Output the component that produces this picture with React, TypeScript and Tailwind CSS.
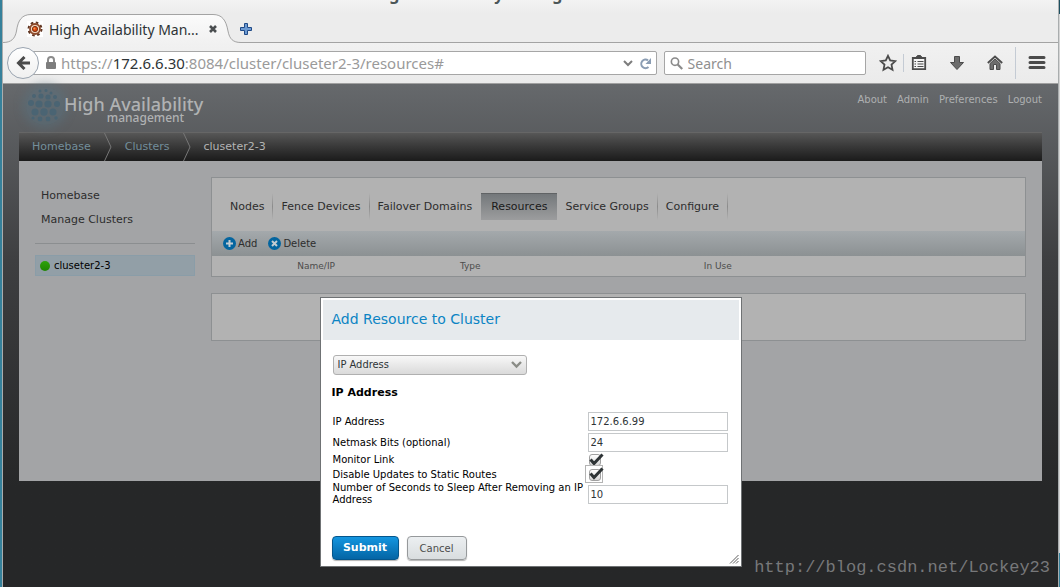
import type { ReactNode } from "react"

const tabs = ["Nodes", "Fence Devices", "Failover Domains", "Resources", "Service Groups", "Configure"]
const userLinks = ["About", "Admin", "Preferences", "Logout"]
const columns = [
  { name: "", width: "w-[10%]" },
  { name: "Name/IP", width: "w-[20%]" },
  { name: "Type", width: "w-[30%]" },
  { name: "In Use", width: "w-[40%]" }
]

const TabTitle = () => (
  <div className="relative flex h-[29px] w-[238px] items-center pl-6 pr-[23px]">
    <svg className="absolute inset-0" width="238" height="29" viewBox="0 0 238 29" fill="none">
      <defs>
        <linearGradient id="tab" x1="0" y1="0" x2="0" y2="1">
          <stop offset="0" stopColor="#fbfbfb" />
          <stop offset="1" stopColor="#f1f1f1" />
        </linearGradient>
      </defs>
      <path d="M0 29V28.500C8 28.500 12 25 13.500 17C15 6 19 .5 28 .5H210C219 .5 223 6 225 17C226.500 25 230 28.500 238 28.500V29Z" fill="url(#tab)" />
      <path d="M0 28.500C8 28.500 12 25 13.500 17C15 6 19 .5 28 .5H210C219 .5 223 6 225 17C226.500 25 230 28.500 238 28.500" stroke="#a3a3a3" />
    </svg>
    <svg className="relative shrink-0" width="16" height="16" viewBox="0 0 16 16">
      <rect width="16" height="16" fill="#fff" />
      <circle cx="8" cy="8" r="6.500" fill="none" stroke="#5d3522" strokeWidth="2" strokeDasharray="2.600 2.500" />
      <circle cx="8" cy="8" r="5" fill="#f3d9c4" stroke="#8d4a2b" strokeWidth="1.800" />
      <circle cx="8" cy="8" r="2.600" fill="#d9420c" stroke="#7b3413" />
      <circle cx="7.400" cy="7.400" r="1" fill="#ff9a4d" />
    </svg>
    <span className="relative ml-[6px] flex-1 whitespace-nowrap pt-[2px] text-[14px] text-[#2e3436]">High Availability Man...</span>
    <button aria-label="Close tab" className="relative">
      <svg width="10" height="10" viewBox="0 0 10 10"><path d="M2 2L8 8M8 2L2 8" stroke="#4a4e50" strokeWidth="2.600" /></svg>
    </button>
  </div>
)

const ToolButton = ({ label, children }: { label: string; children: ReactNode }) => (
  <button aria-label={label} className="flex w-5 justify-center">
    <svg width="18" height="18" viewBox="0 0 18 18" fill="none" stroke="#4b4b4b">{children}</svg>
  </button>
)

const BrowserChrome = () => (
  <header className="bg-[#ececec] font-['Noto_Sans',sans-serif]">
    <div className="h-[14px] overflow-hidden bg-linear-to-b from-[#f3f3f3] to-[#ececec] pl-[35%]">
      <div className="-mt-[16px] whitespace-nowrap text-[16px] font-bold leading-[20px] text-[#4c5658]">High Availability Management - Mozilla Firefox</div>
    </div>
    <div className="flex h-[29px] items-end border-b border-[#a3a3a3]">
      <div className="-mb-px"><TabTitle /></div>
      <button aria-label="New tab" className="-ml-px mb-[7px]">
        <svg width="12" height="12" viewBox="0 0 12 12"><path d="M4.500.5H7.500V4.500H11.500V7.500H7.500V11.500H4.500V7.500H.5V4.500H4.500Z" fill="#6c9ad2" stroke="#204a87" strokeLinejoin="round" /></svg>
      </button>
    </div>
    <div className="flex h-[41px] items-center border-b border-[#a0a0a0] bg-linear-to-b from-[#f1f1f1] to-[#ebebeb] pl-1">
      <button aria-label="Back" className="relative flex size-8 shrink-0 items-center justify-center rounded-full border border-[#9aa4b0] bg-linear-to-b from-white to-[#f0f0f0]">
        <svg width="14" height="14" viewBox="0 0 14 14" fill="none" stroke="#4b4b4b" strokeWidth="3"><path d="M14 7H3M8.500 1L2.500 7L8.500 13" /></svg>
      </button>
      <div className="-ml-3 flex h-6 flex-1 items-center rounded-[2px] border border-[#a6a6a6] bg-white pl-[17px] pr-1">
        <svg width="12" height="14" viewBox="0 0 12 14"><path d="M3 7V4A3 3 0 0 1 9 4V7" fill="none" stroke="#8b8b8b" strokeWidth="2" /><rect x="1" y="6" width="10" height="7" rx="1" fill="#7d7d7d" /></svg>
        <div className="ml-1 flex-1 whitespace-nowrap text-[15px] text-[#9a9a9a]">
          https://<span className="text-[#2e3436]">172.6.6.30</span>:8084/cluster/cluseter2-3/resources#
        </div>
        <svg width="10" height="7" viewBox="0 0 10 7" fill="none" stroke="#7d7d7d" strokeWidth="2"><path d="M1 1L5 5L9 1" /></svg>
        <svg className="ml-[6px]" width="13" height="13" viewBox="0 0 13 13"><path d="M9.500 10A4.300 4.300 0 1 1 9 3.300" fill="none" stroke="#8b9db3" strokeWidth="2" /><path d="M12 1V7H6.500Z" fill="#8b9db3" /></svg>
      </div>
      <div className="ml-[7px] flex h-6 w-[202px] items-center rounded-[2px] border border-[#a6a6a6] bg-white px-[5px]">
        <svg width="15" height="15" viewBox="0 0 15 15" fill="none" stroke="#8b8b8b"><circle cx="5.500" cy="5.500" r="4" strokeWidth="1.800" /><path d="M8.500 8.500L13.500 13.500" strokeWidth="2.400" /></svg>
        <input aria-label="Search" placeholder="Search" className="ml-1 w-full text-[14px] placeholder:text-[#8f8f8f] outline-none" />
      </div>
      <div className="flex items-center pl-[12px]">
        <ToolButton label="Bookmark"><path d="M9 1.800L11.200 6.500L16.300 7.100L12.500 10.600L13.500 15.700L9 13.200L4.500 15.700L5.500 10.600L1.700 7.100L6.800 6.500Z" strokeWidth="1.800" /></ToolButton>
        <div className="mx-[5px] h-[18px] w-px bg-[#c4cbd4]" />
        <ToolButton label="Bookmarks list">
          <path d="M2.800 4H15.200V15.200H2.800Z" fill="#f4f4f4" strokeWidth="1.800" /><path d="M5.500 4L7.500 1.500H10.500L12.500 4Z" fill="#4b4b4b" /><path d="M4.500 7.500H6M7.500 7.500H13.500M4.500 10H6M7.500 10H13.500M4.500 12.500H6M7.500 12.500H13.500" strokeWidth="1.200" />
        </ToolButton>
        <div className="ml-[18px]"><ToolButton label="Downloads"><path d="M6.500 2.500H11.500V8.500H15.500L9 15.500L2.500 8.500H6.500Z" fill="#6d6d6d" /></ToolButton></div>
        <div className="ml-[18px]"><ToolButton label="Home"><path d="M1.800 9L9 2.500L16.200 9" strokeWidth="1.800" /><path d="M4 9.500L9 5L14 9.500V15.500H10.500V10.500H7.500V15.500H4Z" fill="#6d6d6d" /></ToolButton></div>
        <div className="ml-[10px] h-8 w-px bg-[#c4cbd4]" />
        <div className="mx-[11px]"><ToolButton label="Menu"><path d="M2 3.500H16M2 8.500H16M2 13.500H16" strokeWidth="3" strokeLinecap="round" /></ToolButton></div>
      </div>
    </div>
  </header>
)

const Logo = () => (
  <div className="flex items-start font-['Noto_Sans',sans-serif] text-[#b0b2b3]">
    <div className="flex size-[38px] items-center justify-center rounded-full bg-[#587382]/40 shadow-[0_0_8px_4px_rgba(88,115,130,0.4)]">
      <svg width="36" height="36" viewBox="0 0 36 36" fill="#4a6473">
        <circle cx="13" cy="3" r="1.500" /><circle cx="19" cy="2.500" r="1.500" /><circle cx="24" cy="5" r="1.500" />
        <circle cx="7" cy="8" r="2" /><circle cx="14" cy="8" r="2.600" /><circle cx="21" cy="9" r="2.600" /><circle cx="28" cy="9" r="2" />
        <circle cx="4" cy="15" r="3" /><circle cx="12" cy="16" r="3.600" /><circle cx="21" cy="16" r="3.600" /><circle cx="30" cy="16" r="3" />
        <circle cx="8" cy="24" r="3.500" /><circle cx="17" cy="24" r="3.700" /><circle cx="26" cy="24" r="3.500" />
        <circle cx="13" cy="31" r="2.400" /><circle cx="21" cy="31" r="2.400" /><circle cx="29" cy="30" r="1.700" /><circle cx="6" cy="30" r="1.500" />
      </svg>
    </div>
    <div className="pt-[7px] text-right">
      <div className="text-[18px] font-medium leading-[20px]">High Availability</div>
      <div className="pr-[19px] text-[12px] font-medium leading-[8px]">management</div>
    </div>
  </div>
)

const Crumb = ({ children }: { children: ReactNode }) => (
  <>
    <a href="#" className="px-[13px] text-[#738e9b]">{children}</a>
    <svg width="8" height="28" viewBox="0 0 8 28" fill="none" stroke="#777"><path d="M.5 0L7 14L.5 28" /></svg>
  </>
)

const Sidebar = () => (
  <aside className="w-[160px] shrink-0">
    <nav className="flex flex-col pl-[6px] pt-[7px] text-[11px] leading-6 text-[#2d2d2d]">
      <a href="#">Homebase</a>
      <a href="#">Manage Clusters</a>
    </nav>
    <hr className="mt-[11px] border-[#8b8e90]" />
    <a href="#" className="mt-[11px] flex h-[21px] items-center border border-[#8a9da8] bg-[#929fa7] pl-1 text-[10px] text-black">
      <span className="mr-1 size-[10px] rounded-full bg-linear-to-b from-[#2fa30c] to-[#1f8502]" />
      cluseter2-3
    </a>
  </aside>
)

const ActionButton = ({ label, icon }: { label: string; icon: string }) => (
  <button className="flex items-center gap-[2px] text-[10px] text-[#2d2d2d]">
    <svg width="13" height="13" viewBox="0 0 13 13">
      <circle cx="6.500" cy="6.500" r="6.500" fill="#04659f" />
      <path d={icon} stroke="#c4ccd1" strokeWidth="2" />
    </svg>
    {label}
  </button>
)

const ResourcePanel = () => (
  <section className="border border-[#8d9092] bg-[#b2b2b2]">
    <nav className="flex h-[53px] items-end px-[10px] pb-[11px] text-[11px] text-[#2d2d2d]">
      {tabs.map(tab => {
        const active = tab === "Resources"
        return (
          <div key={tab} className="flex h-[27px] items-center">
            <a href="#" className={active ? "flex h-[27px] items-center border-t border-[#606365] bg-linear-to-b from-[#74787b] to-[#9c9d9e] px-[10px] text-[#1a1a1a]" : "border-t border-transparent px-2"}>{tab}</a>
            {!active && <div className={tab === "Failover Domains" ? "w-px" : "h-[27px] w-px bg-linear-to-b from-[#b2b2b2] via-[#8b8b8b] to-[#b2b2b2]"} />}
          </div>
        )
      })}
    </nav>
    <div className="flex h-[25px] items-center gap-[11px] bg-linear-to-b from-[#a4a9ac] to-[#8c9193] px-[11px]">
      <ActionButton label="Add" icon="M6.500 3V10M3 6.500H10" />
      <ActionButton label="Delete" icon="M4 4L9 9M9 4L4 9" />
    </div>
    <table className="w-full table-fixed text-left text-[9px] leading-5 text-[#4c4c4c]">
      <thead>
        <tr>
          {columns.map(col => <th key={col.width} className={`${col.width} py-0 pl-1 font-normal`}>{col.name}</th>)}
        </tr>
      </thead>
    </table>
  </section>
)

const CheckBox = ({ id, focused }: { id: string; focused?: boolean }) => (
  <span className="relative flex h-[13px] items-center">
    {focused && <span className="pointer-events-none absolute -left-[3px] -top-[3px] size-[18px] border border-[#b4b4b4]" />}
    <input id={id} type="checkbox" defaultChecked className="ml-px size-[12px] appearance-none rounded-[3px] border border-[#a0a0a0] bg-linear-to-b from-white to-[#d8d8d8]" />
    <svg className="pointer-events-none absolute -top-px left-0" width="16" height="14" viewBox="0 0 16 14" fill="none">
      <path d="M2.500 6.500L6 10.500L14.500 1.500" stroke="#2e3436" strokeWidth="3" />
    </svg>
  </span>
)

const TextBox = ({ id, value }: { id: string; value: string }) => (
  <input id={id} type="text" defaultValue={value} className="my-px h-[19px] w-[140px] border border-[#c5c8ca] bg-white px-[2px] text-[10px] text-[#2e3436]" />
)

const AddResourceDialog = () => (
  <form role="dialog" aria-labelledby="dialog-title" className="relative w-[422px] border border-[#6f7274] bg-white p-[2px] text-[10px] text-black">
    <h2 id="dialog-title" className="bg-[#e6eaed] px-[9px] pb-[11px] pt-[9px] text-[14px] leading-5 text-[#0b84c4]">Add Resource to Cluster</h2>
    <div className="px-[9px] pb-1 pt-[15px]">
      <div className="relative ml-px w-[194px]">
        <select aria-label="Resource type" className="h-5 w-full appearance-none rounded-[3px] border border-[#b0b0b0] bg-linear-to-b from-[#f8f8f8] to-[#dadada] px-1 pt-px font-['DejaVu_Sans_Condensed','DejaVu_Sans',sans-serif] text-[11px] text-[#2e3436]">
          <option>IP Address</option>
        </select>
        <svg className="pointer-events-none absolute right-[5px] top-[6px]" width="11" height="8" viewBox="0 0 11 8" fill="none" stroke="#8a8c86" strokeWidth="2.400"><path d="M1 1L5.500 5.500L10 1" /></svg>
      </div>
      <h3 className="mb-[10px] mt-[10px] text-[11px] font-bold leading-4">IP Address</h3>
      <div className="grid grid-cols-[255px_140px] items-center pl-px">
        <label htmlFor="ip">IP Address</label>
        <TextBox id="ip" value="172.6.6.99" />
        <label htmlFor="netmask">Netmask Bits (optional)</label>
        <TextBox id="netmask" value="24" />
        <label htmlFor="monitor" className="leading-[14px]">Monitor Link</label>
        <CheckBox id="monitor" />
        <label htmlFor="routes" className="leading-[15px]">Disable Updates to Static Routes</label>
        <CheckBox id="routes" focused />
        <label htmlFor="sleep" className="leading-[12px]">Number of Seconds to Sleep After Removing an IP Address</label>
        <TextBox id="sleep" value="10" />
      </div>
      <div className="mt-[30px] flex gap-2">
        <button type="submit" className="h-6 w-[67px] rounded-[4px] border border-[#04568c] bg-linear-to-b from-[#1496e0] to-[#0465a5] text-[11px] font-bold text-white shadow-[0_1px_1px_rgba(0,0,0,0.3)]">Submit</button>
        <button type="button" className="h-6 w-[60px] rounded-[4px] border border-[#96999b] bg-linear-to-b from-[#eceff1] to-[#d9dddf] text-[10px] text-[#4c4c4c] shadow-[0_1px_1px_rgba(0,0,0,0.3)]">Cancel</button>
      </div>
    </div>
    <svg className="absolute bottom-[2px] right-[2px]" width="10" height="10" viewBox="0 0 10 10" stroke="#5f5f5f"><path d="M1 9.500L9.500 1M4 9.500L9.500 4M7 9.500L9.500 7" /></svg>
  </form>
)

const App = () => (
  <div className="flex min-h-screen font-['DejaVu_Sans',sans-serif]">
    <div className="w-[3px] shrink-0 border-r border-[#a9adae] bg-[#36819b]" />
    <div className="flex min-w-0 flex-1 flex-col">
      <BrowserChrome />
      <div className="relative flex-1 bg-linear-to-b from-[#66696c] via-[#3e3f41] via-35% to-[#262728] to-80% px-4 pb-[106px]">
        <div className="flex h-[48px] justify-between pl-[7px] pt-[3px]">
          <Logo />
          <nav className="flex gap-[10px] pt-[5px] text-[10px] text-[#aeb0b1]">
            {userLinks.map(link => <a key={link} href="#">{link}</a>)}
          </nav>
        </div>
        <nav className="flex h-[29px] items-center border-t border-[#666] bg-linear-to-b from-[#575757] to-[#1b1b1b] text-[11px]">
          <Crumb>Homebase</Crumb>
          <Crumb>Clusters</Crumb>
          <span className="px-[13px] text-[#b4b4b4]">cluseter2-3</span>
        </nav>
        <div className="flex min-h-[320px] gap-4 bg-[#a3a4a6] p-4">
          <Sidebar />
          <main className="min-w-0 flex-1">
            <ResourcePanel />
            <section className="mt-4 h-[48px] border border-[#8d9092] bg-[#b2b2b2]" />
          </main>
        </div>
        <div className="absolute inset-x-0 top-[213px] flex justify-center">
          <AddResourceDialog />
        </div>
        <div className="absolute bottom-[7px] right-[8px] font-['Liberation_Mono',monospace] text-[17px] leading-6 text-[#77787a]">http://blog.csdn.net/Lockey23</div>
      </div>
    </div>
    <div className="flex w-[2px] shrink-0 flex-col border-l border-[#a9adae] bg-[#d5d5d5]">
      <div className="h-[14px] bg-[#1d4f60]" />
      <div className="flex-1" />
      <div className="h-[34px] bg-[#36819b]" />
    </div>
  </div>
)

export default App
